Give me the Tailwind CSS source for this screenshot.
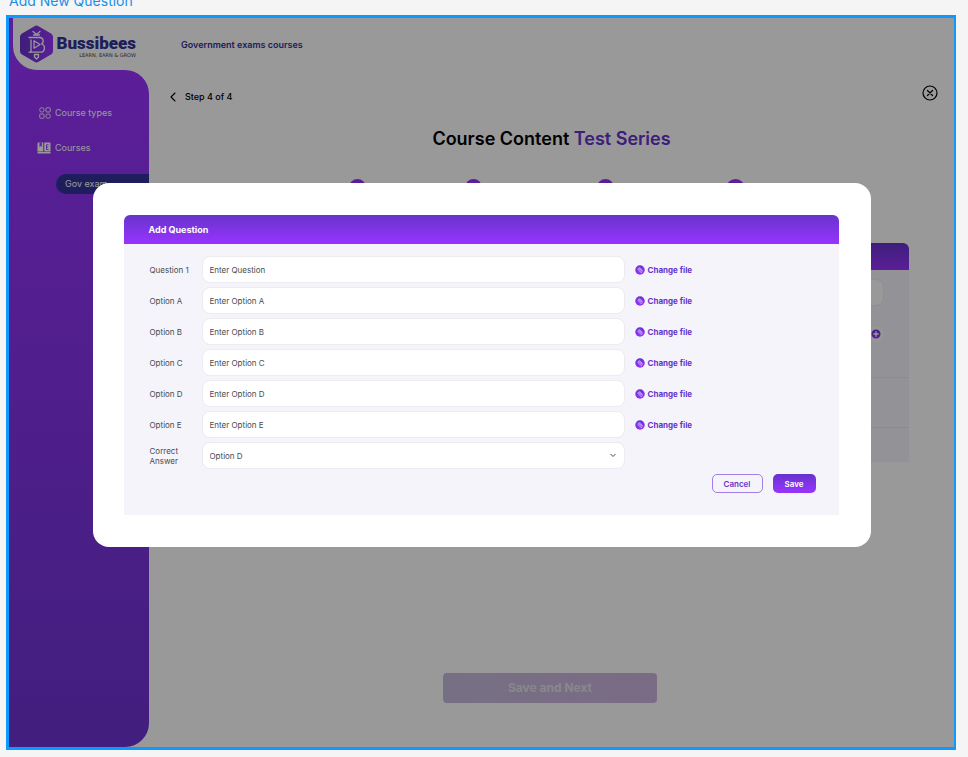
<!DOCTYPE html>
<html lang="en">
<head>
<meta charset="utf-8">
<meta name="viewport" content="width=device-width, initial-scale=1">
<title>Add New Question</title>
<script src="https://cdn.jsdelivr.net/npm/@tailwindcss/browser@4"></script>
</head>
<body class="min-h-screen flex flex-col bg-[#f5f5f5] pb-[7px] font-['Inter',sans-serif]">
<svg width="0" height="0" class="absolute" aria-hidden="true">
  <defs>
    <linearGradient id="violet" x1="0" y1="0" x2="0" y2="1"><stop offset="0" stop-color="#6633cc"/><stop offset="1" stop-color="#9933ff"/></linearGradient>
    <linearGradient id="hex" x1="0" y1="0" x2="1" y2="0"><stop offset="0" stop-color="#6633cc"/><stop offset="1" stop-color="#9933ff"/></linearGradient>
    <symbol id="clip" viewBox="0 0 20 20">
      <circle cx="10" cy="10" r="9.5" fill="url(#violet)"/>
      <path d="M14.8 10.6 10.4 6.2a2.7 2.7 0 0 0-3.8 3.8l4.6 4.6a1.8 1.8 0 0 0 2.6-2.6L9.500 7.700a.9.9 0 0 0-1.300 1.300l3.600 3.600" fill="none" stroke="#eadcff" stroke-width="1.200" stroke-linecap="round"/>
    </symbol>
  </defs>
</svg>

<div class="h-[15px] flex items-end overflow-hidden pl-[9px]">
  <span class="text-sm leading-7 text-[#1a8fe8] whitespace-nowrap">Add New Question</span>
</div>

<div class="relative flex-1 flex ml-[6px] mr-3 border-3 border-r-2 border-[#0d99ff] bg-white overflow-hidden">
  <aside class="w-[140px] shrink-0 flex flex-col">
    <div class="bg-[#9933ff] pl-1">
      <div class="h-[52px] bg-white rounded-bl-3xl flex items-center pl-[7px] gap-[3px]">
        <svg class="w-[33px] h-[38px] shrink-0" viewBox="0 0 33 38" fill="none">
          <path d="M14.500 1.200a4 4 0 0 1 4 0l12.500 7.200a4 4 0 0 1 2 3.500v14.200a4 4 0 0 1-2 3.500l-12.500 7.200a4 4 0 0 1-4 0L2 29.600a4 4 0 0 1-2-3.500V11.900a4 4 0 0 1 2-3.500z" fill="url(#hex)"/>
          <g stroke="#fff" stroke-width="1.300" stroke-linecap="round" stroke-linejoin="round">
            <path d="M13 6.500l3.500 3 3.500-3M13.500 10h6"/>
            <path d="M9 12.500h11a3.500 3.500 0 0 1 1.500 6.500a4.200 4.200 0 0 1-1.500 8.200H11V15"/>
            <path d="M9 27.200h2M14 15.800v7.400l6-3.700z"/>
            <path d="M14.500 29.500v2.500l2 2 2-2v-2.500z"/>
          </g>
        </svg>
        <div class="w-20 flex flex-col items-end text-[#333399] pt-1">
          <span class="font-['Roboto'] font-black text-[17px] leading-[18px]">Bussibees</span>
          <span class="font-['DejaVu_Sans'] text-[5px] leading-[6px] text-[#444] whitespace-nowrap">LEARN, EARN &amp; GROW</span>
        </div>
      </div>
    </div>
    <nav class="flex-1 rounded-r-3xl bg-linear-to-b from-[#9933ff] to-[#6e33d2] text-white text-[9px] leading-3 pt-9">
      <ul class="flex flex-col">
        <li><a href="#" class="flex items-center gap-1 pl-[30px] h-[14px]">
          <svg class="w-3 h-3" viewBox="0 0 24 24" fill="none" stroke="#fff" stroke-width="1.800"><rect x="1.500" y="1.500" width="8.500" height="8.500" rx="3.500"/><rect x="14" y="1.500" width="8.500" height="8.500" rx="1.500"/><rect x="1.500" y="14" width="8.500" height="8.500" rx="1.500"/><rect x="14" y="14" width="8.500" height="8.500" rx="3.500"/></svg>
          Course types</a></li>
        <li class="mt-[21px]"><a href="#" class="flex items-center gap-1 pl-7 h-[14px]">
          <svg class="w-[14px] h-3" viewBox="0 0 28 24"><path d="M3 1h9.500v18H3a2 2 0 0 0-2 1V3a2 2 0 0 1 2-2z" fill="#fff"/><path d="M5 1h4.500v9L7.200 8 5 10z" fill="#9933ff"/><path d="M14.500 1H25a2 2 0 0 1 2 2v16H14.500z" fill="#fff"/><path d="M23 5.500h-4v9.500h4M19 10.200h3.500" fill="none" stroke="#9933ff" stroke-width="1.800"/><path d="M1 21.500h26" stroke="#fff" stroke-width="3"/></svg>
          Courses</a></li>
        <li class="mt-[19px]"><a href="#" class="ml-[47px] pl-[9px] h-5 flex items-center rounded-l-full bg-[#333399]">Gov exam</a></li>
      </ul>
    </nav>
  </aside>

  <main class="flex-1 flex flex-col">
    <header class="h-[54px] flex items-center pl-8">
      <h1 class="text-[9px] font-semibold text-[#333399]">Government exams courses</h1>
    </header>
    <div class="flex items-start justify-between pl-5 pr-4 pt-[13px]">
      <a href="#" class="flex items-center gap-2 h-6 text-[9px] font-medium text-black">
        <svg class="w-2 h-[10px]" viewBox="0 0 8 10" fill="none" stroke="#000" stroke-width="1.100" stroke-linecap="round" stroke-linejoin="round"><path d="M6 1 2 5l4 4"/></svg>
        Step 4 of 4</a>
      <button type="button" aria-label="Close">
        <svg class="w-4 h-4" viewBox="0 0 16 16" fill="none" stroke="#000" stroke-width="1.200" stroke-linecap="round"><circle cx="8" cy="8" r="7"/><path d="M5.500 5.500l5 5M10.500 5.500l-5 5"/></svg>
      </button>
    </div>
    <h2 class="mt-4 text-center text-lg leading-7 font-semibold text-black">Course Content <span class="text-[#6633cc]">Test Series</span></h2>
    <div class="mt-[26px] pl-[200px] grid grid-cols-[116px_132px_129px_19px]">
      <span class="size-[17px] rounded-full bg-[#9933ff]"></span>
      <span class="size-[17px] rounded-full bg-[#9933ff]"></span>
      <span class="size-[17px] rounded-full bg-[#9933ff]"></span>
      <span class="size-[19px] rounded-full bg-[#9933ff]"></span>
    </div>
    <section class="mt-[45px] mx-[45px] rounded-t-md overflow-hidden bg-[#f5f4fb]">
      <div class="h-[27px] bg-linear-to-b from-[#6633cc] to-[#9933ff]"></div>
      <div class="px-[25px] pt-[9px] h-[108px] border-b border-[#e9e8f0]">
        <div class="h-[27px] rounded-lg border border-[#efeff2] bg-white"></div>
        <div class="mt-5 flex justify-end">
          <span class="size-4 rounded-full bg-white/50 flex items-center justify-center">
            <svg class="size-[10px]" viewBox="0 0 10 10"><circle cx="5" cy="5" r="4.500" fill="url(#violet)"/><path d="M5 2.300v5.400M2.300 5h5.400" stroke="#fff" stroke-width="1.300"/></svg>
          </span>
        </div>
      </div>
      <div class="h-[50px] border-b border-[#e9e8f0]"></div>
      <div class="h-[34px]"></div>
    </section>
    <button type="button" class="mt-auto mb-11 mr-[3px] self-center w-[214px] h-[30px] rounded-[4px] bg-linear-to-r from-[#c5bbdc] to-[#cdb2df] text-xs font-bold text-[#e4e1e8]">Save and Next</button>
  </main>

  <div class="absolute inset-0 bg-black/40 flex justify-center items-start pt-[165px] px-4">
    <form role="dialog" aria-labelledby="dlg-title" class="w-full max-w-[778px] bg-white rounded-2xl pl-[31px] pr-8 py-8 text-[8px] text-[#464c50]">
      <h3 id="dlg-title" class="h-[29px] flex items-center pl-[25px] rounded-t-md bg-linear-to-b from-[#6633cc] to-[#9933ff] text-[9px] font-bold text-white">Add Question</h3>
      <div class="bg-[#f5f4fb] pl-[26px] pr-[23px] pt-3 pb-[22px]">
        <div class="grid grid-cols-[42px_minmax(0,423px)_1fr] gap-x-[10px] gap-y-1 items-center leading-[10px]">
          <label for="q1" class="whitespace-nowrap">Question 1</label>
          <input id="q1" type="text" placeholder="Enter Question" class="h-[27px] w-full rounded-lg border border-[#ebebf0] bg-white px-[7px] placeholder:text-[#464c50]">
          <button type="button" class="justify-self-start flex items-center gap-[3px] font-bold text-[#6633cc]"><svg class="size-[10px]"><use href="#clip"/></svg>Change file</button>

          <label for="oa">Option A</label>
          <input id="oa" type="text" placeholder="Enter Option A" class="h-[27px] w-full rounded-lg border border-[#ebebf0] bg-white px-[7px] placeholder:text-[#464c50]">
          <button type="button" class="justify-self-start flex items-center gap-[3px] font-bold text-[#6633cc]"><svg class="size-[10px]"><use href="#clip"/></svg>Change file</button>

          <label for="ob">Option B</label>
          <input id="ob" type="text" placeholder="Enter Option B" class="h-[27px] w-full rounded-lg border border-[#ebebf0] bg-white px-[7px] placeholder:text-[#464c50]">
          <button type="button" class="justify-self-start flex items-center gap-[3px] font-bold text-[#6633cc]"><svg class="size-[10px]"><use href="#clip"/></svg>Change file</button>

          <label for="oc">Option C</label>
          <input id="oc" type="text" placeholder="Enter Option C" class="h-[27px] w-full rounded-lg border border-[#ebebf0] bg-white px-[7px] placeholder:text-[#464c50]">
          <button type="button" class="justify-self-start flex items-center gap-[3px] font-bold text-[#6633cc]"><svg class="size-[10px]"><use href="#clip"/></svg>Change file</button>

          <label for="od">Option D</label>
          <input id="od" type="text" placeholder="Enter Option D" class="h-[27px] w-full rounded-lg border border-[#ebebf0] bg-white px-[7px] placeholder:text-[#464c50]">
          <button type="button" class="justify-self-start flex items-center gap-[3px] font-bold text-[#6633cc]"><svg class="size-[10px]"><use href="#clip"/></svg>Change file</button>

          <label for="oe">Option E</label>
          <input id="oe" type="text" placeholder="Enter Option E" class="h-[27px] w-full rounded-lg border border-[#ebebf0] bg-white px-[7px] placeholder:text-[#464c50]">
          <button type="button" class="justify-self-start flex items-center gap-[3px] font-bold text-[#6633cc]"><svg class="size-[10px]"><use href="#clip"/></svg>Change file</button>

          <label for="ans">Correct Answer</label>
          <div class="relative">
            <select id="ans" class="appearance-none block h-[27px] w-full rounded-lg border border-[#ebebf0] bg-white px-[7px]"><option>Option D</option></select>
            <svg class="pointer-events-none absolute right-[9px] top-[11px] w-[6px] h-[5px]" viewBox="0 0 6 5" fill="none" stroke="#464c50"><path d="M.5 1 3 3.500 5.500 1"/></svg>
          </div>
        </div>
        <div class="mt-[5px] flex justify-end gap-[10px] font-semibold">
          <button type="button" class="h-[19px] w-[51px] rounded-[5px] border border-[#a27fe6] text-[#6633cc]">Cancel</button>
          <button type="submit" class="h-[19px] w-[43px] rounded-[5px] bg-linear-to-b from-[#6633cc] to-[#9933ff] text-white">Save</button>
        </div>
      </div>
    </form>
  </div>
</div>
</body>
</html>
